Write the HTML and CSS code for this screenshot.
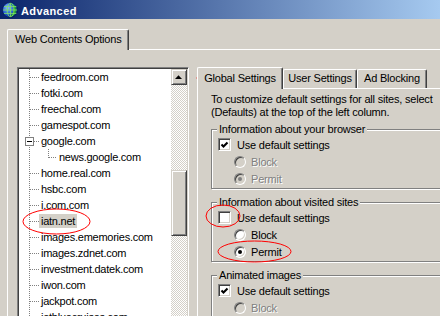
FILE: index.html
```html
<!DOCTYPE html>
<html lang="en">
<head>
	<title>Advanced</title>
	<meta charset="utf-8" />
	<link rel="stylesheet" href="styles.css">
</head>
<body>
	<div id="window">
		<div class="titlebar">
			<svg class="app-icon" viewBox="0 0 16 16" width="16" height="16">
				<defs>
					<radialGradient id="sea" cx="35%" cy="35%" r="75%">
						<stop offset="0" stop-color="#8fc0ff"/>
						<stop offset=".55" stop-color="#1f58d8"/>
						<stop offset="1" stop-color="#06206e"/>
					</radialGradient>
				</defs>
				<circle cx="8" cy="8" r="7.5" fill="url(#sea)"/>
				<path d="M7 1.2c3 .8 4.8 3 4.6 6.4-.2 3.4-1.8 5.4-3.8 7.2 3.8-.2 6.7-3.2 6.7-6.8 0-3.7-3.2-6.9-7.5-6.8z" fill="#1f9a2c"/>
				<g fill="none" stroke="#7ee06a" stroke-width=".9">
					<ellipse cx="8.6" cy="8" rx="3.4" ry="6.9"/>
					<path d="M8.6 1v14M2 4.6h13M1 8h14.4M2 11.4h13"/>
				</g>
				<circle cx="8" cy="8" r="7.5" fill="none" stroke="#04184e" stroke-width=".6"/>
			</svg>
			<span class="caption">Advanced</span>
		</div>

		<div class="client">
			<div class="tabstrip">
				<div class="tab selected">Web Contents Options</div>
			</div>
			<div class="panel main">
				<div class="sites">
					<ul class="tree">
						<li><span class="twig"></span><span class="name">feedroom.com</span></li>
						<li><span class="twig"></span><span class="name">fotki.com</span></li>
						<li><span class="twig"></span><span class="name">freechal.com</span></li>
						<li><span class="twig"></span><span class="name">gamespot.com</span></li>
						<li class="open"><span class="twig"><span class="toggle"></span></span><span class="name">google.com</span></li>
						<li class="child"><span class="twig"></span><span class="name">news.google.com</span></li>
						<li><span class="twig"></span><span class="name">home.real.com</span></li>
						<li><span class="twig"></span><span class="name">hsbc.com</span></li>
						<li><span class="twig"></span><span class="name">i.com.com</span></li>
						<li class="current"><span class="twig"></span><span class="name">iatn.net</span></li>
						<li><span class="twig"></span><span class="name">images.ememories.com</span></li>
						<li><span class="twig"></span><span class="name">images.zdnet.com</span></li>
						<li><span class="twig"></span><span class="name">investment.datek.com</span></li>
						<li><span class="twig"></span><span class="name">iwon.com</span></li>
						<li><span class="twig"></span><span class="name">jackpot.com</span></li>
						<li><span class="twig"></span><span class="name">jetbluecruises.com</span></li>
					</ul>
					<div class="scrollbar">
						<div class="arrow">
							<svg viewBox="0 0 7 4" width="7" height="4"><polygon points="0,4 7,4 3.5,0.2" fill="#000"/></svg>
						</div>
						<div class="track"><div class="thumb"></div></div>
					</div>
				</div>

				<div class="settings">
					<div class="tabstrip">
						<div class="tab selected global">Global Settings</div>
						<div class="tab user">User Settings</div>
						<div class="tab ads">Ad Blocking</div>
					</div>
					<div class="panel inner">
						<p class="hint">To customize default settings for all sites, select<br>(Defaults) at the top of the left column.</p>

						<div class="group">
							<div class="legend">Information about your browser</div>
							<div class="option"><span class="check on"><svg viewBox="0 0 13 13" width="13" height="13"><path d="M3.5 6.5l2 2 4-4" fill="none" stroke="#000" stroke-width="2.1"/></svg></span>Use default settings</div>
							<div class="option sub disabled"><span class="radio"></span>Block</div>
							<div class="option sub disabled"><span class="radio on"></span>Permit</div>
						</div>

						<div class="group">
							<div class="legend">Information about visited sites</div>
							<div class="option"><span class="check"></span>Use default settings</div>
							<div class="option sub"><span class="radio"></span>Block</div>
							<div class="option sub"><span class="radio on"></span>Permit</div>
						</div>

						<div class="group">
							<div class="legend">Animated images</div>
							<div class="option"><span class="check on"><svg viewBox="0 0 13 13" width="13" height="13"><path d="M3.5 6.5l2 2 4-4" fill="none" stroke="#000" stroke-width="2.1"/></svg></span>Use default settings</div>
							<div class="option sub disabled"><span class="radio"></span>Block</div>
							<div class="option sub disabled"><span class="radio on"></span>Permit</div>
						</div>
					</div>
				</div>
			</div>
		</div>

		<!-- red marker rings drawn over the screenshot -->
		<svg class="marks" viewBox="0 0 440 316" width="440" height="316">
			<g fill="none" stroke="#f00" stroke-width="1">
				<ellipse cx="239.5" cy="78" rx="42.5" ry="8.5"/>
				<ellipse cx="56.5" cy="221.5" rx="33.5" ry="12.5"/>
				<ellipse cx="223" cy="216" rx="17" ry="11"/>
				<ellipse cx="254.5" cy="251.5" rx="36.5" ry="10.5"/>
			</g>
		</svg>
	</div>
</body>
</html>
```

FILE: styles.css
```css
html, body {
	margin: 0;
	height: 100%;
	overflow: hidden;
}
body {
	font-family: "Liberation Sans", Arial, sans-serif;
	font-size: 11px;
	letter-spacing: -0.2px;
	color: #000;
	background: #d4d0c8;
}
#window {
	position: relative;
	width: 440px;
	height: 316px;
	overflow: hidden;
}
.titlebar {
	display: flex;
	align-items: center;
	height: 19px;
	padding-top: 1px;
	box-sizing: border-box;
	background: linear-gradient(90deg, #0a246a, #a6caf0);
}
.app-icon {
	margin: 0 3px 0 2px;
	flex: none;
}
.caption {
	color: #fff;
	font-weight: bold;
	letter-spacing: .4px;
	padding-top: 2px;
}
.client {
	padding: 10px 0 0 7px;
}

/* tabs */
.tabstrip {
	display: flex;
	align-items: flex-end;
	height: 20px;
}
.tab {
	position: relative;
	box-sizing: border-box;
	height: 18px;
	line-height: 17px;
	padding: 0 3px 0 5px;
	border: 1px solid #fff;
	border-bottom: none;
	border-right-color: #404040;
	border-radius: 2px 2px 0 0;
	box-shadow: inset -1px 0 #808080;
	background: #d4d0c8;
	white-space: nowrap;
}
.tab.selected {
	z-index: 1;
	height: 21px;
	line-height: 19px;
	margin-bottom: -1px;
	padding: 0 5px 0 7px;
	width: 122px;
}
.settings .tabstrip {
	height: 21px;
}
.settings .tab {
	height: 19px;
}
.settings .tab.selected {
	height: 22px;
	line-height: 20px;
	padding: 0;
	text-align: center;
}
.tab.global { width: 86px; }
.tab.user { width: 74px; text-align: center; padding: 0; }
.tab.ads { width: 70px; text-align: center; padding: 0; }

.panel {
	border-top: 1px solid #fff;
	border-left: 1px solid #fff;
}
.panel.main {
	display: flex;
	align-items: flex-start;
	height: 280px;
	padding: 17px 0 0 9px;
}

/* site tree */
.sites {
	display: flex;
	flex: none;
	box-sizing: border-box;
	width: 172px;
	height: 262px;
	border: 1px solid;
	border-color: #808080 #fff #fff #808080;
	box-shadow: inset 1px 1px #404040, inset -1px -1px #d4d0c8;
	padding: 1px;
}
.tree {
	flex: 1;
	margin: 0;
	padding: 0;
	list-style: none;
	overflow: hidden;
	background: #fff repeating-linear-gradient(to bottom, #808080 0 1px, transparent 1px 2px) 10px 0 / 1px 100% no-repeat;
	letter-spacing: -0.25px;
}
.tree li {
	display: flex;
	align-items: center;
	height: 16px;
	white-space: nowrap;
}
.twig {
	flex: none;
	width: 20px;
	height: 16px;
	background: repeating-linear-gradient(to right, #808080 0 1px, transparent 1px 2px) 11px 8px / 9px 1px no-repeat;
}
.tree li.child {
	padding-left: 18px;
}
.child .twig {
	background:
		repeating-linear-gradient(to right, #808080 0 1px, transparent 1px 2px) 12px 8px / 8px 1px no-repeat,
		repeating-linear-gradient(to bottom, #808080 0 1px, transparent 1px 2px) 11px 0 / 1px 9px no-repeat;
}
.toggle {
	display: block;
	position: relative;
	box-sizing: border-box;
	width: 9px;
	height: 9px;
	margin: 4px 0 0 6px;
	border: 1px solid #808080;
	background: #fff linear-gradient(#000, #000) 1px 3px / 5px 1px no-repeat;
}
.name {
	line-height: 14px;
	padding: 0 2px;
}
.current .name {
	background: #d4d0c8;
}

/* scrollbar */
.scrollbar {
	display: flex;
	flex-direction: column;
	width: 16px;
	flex: none;
}
.arrow,
.thumb {
	box-sizing: border-box;
	border: 1px solid;
	border-color: #d4d0c8 #404040 #404040 #d4d0c8;
	box-shadow: inset 1px 1px #fff, inset -1px -1px #808080;
	background: #d4d0c8;
}
.arrow {
	display: flex;
	align-items: center;
	justify-content: center;
	height: 16px;
}
.arrow svg {
	margin: 0 1px 1px 0;
}
.track {
	flex: 1;
	padding-top: 85px;
	background: repeating-conic-gradient(#fff 0 25%, #d4d0c8 0 50%) 0 0 / 2px 2px;
}
.thumb {
	height: 66px;
}

/* settings */
.settings {
	flex: none;
	width: 300px;
	margin-left: 8px;
}
.panel.inner {
	height: 240px;
	padding: 4px 0 0 13px;
}
.hint {
	margin: 0;
	line-height: 13px;
}
.group {
	width: 260px;
	margin-top: 13px;
	padding-bottom: 1px;
	border: 1px solid #808080;
	box-shadow: inset 1px 1px #fff, 1px 1px #fff;
}
.hint + .group {
	margin-top: 10px;
}
.legend {
	width: fit-content;
	margin: -7px 0 0 5px;
	padding: 0 2px;
	line-height: 13px;
	background: #d4d0c8;
}
.option {
	display: flex;
	align-items: center;
	gap: 6px;
	height: 17px;
	padding-left: 6px;
}
.option.sub {
	gap: 5px;
	padding-left: 22px;
}
.disabled {
	color: #808080;
	text-shadow: 1px 1px 0 #fff;
}
.check,
.radio {
	flex: none;
	box-sizing: border-box;
	border: 1px solid;
	border-color: #808080 #fff #fff #808080;
	box-shadow: inset 1px 1px #404040, inset -1px -1px #d4d0c8;
	background: #fff;
}
.check {
	width: 13px;
	height: 13px;
}
.check svg {
	display: block;
	margin: -1px;
}
.radio {
	display: flex;
	align-items: center;
	justify-content: center;
	width: 12px;
	height: 12px;
	border-radius: 50%;
}
.radio.on::after {
	content: '';
	width: 4px;
	height: 4px;
	border-radius: 50%;
	background: #000;
}
.disabled .radio {
	background: #d4d0c8;
}
.disabled .radio.on::after {
	background: #808080;
}

.marks {
	position: absolute;
	top: 0;
	left: 0;
	pointer-events: none;
}
```
